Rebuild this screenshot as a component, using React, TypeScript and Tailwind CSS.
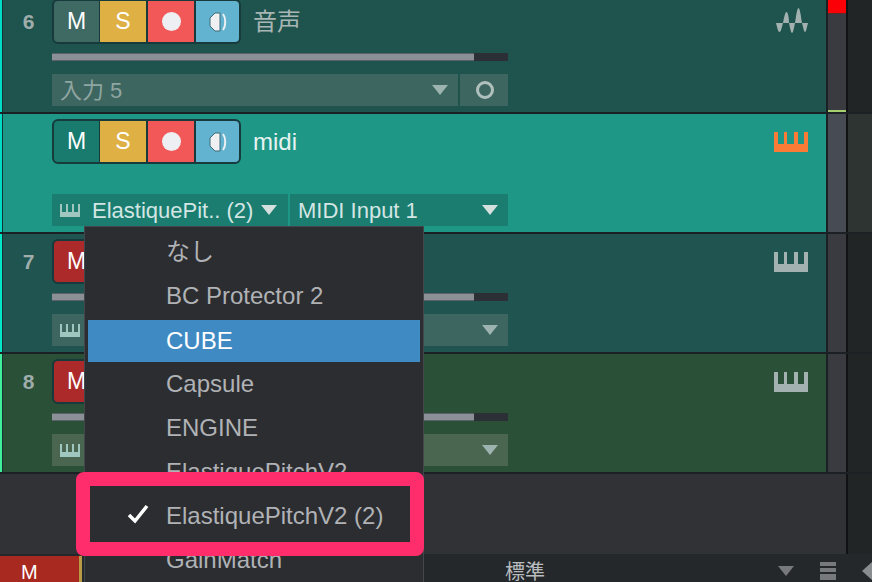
const font = "[font-family:'Liberation_Sans','Noto_Sans_CJK_JP',sans-serif]";

const Piano = ({ color }: { color: string }) => (
  <svg width="34" height="20" viewBox="0 0 34 20">
    <path d="M0 0h4v12h6V0h3v12h7V0h4v12h6V0h4v20H0z" fill={color} />
  </svg>
);

const Piano2 = () => (
  <svg width="20" height="13" viewBox="0 0 20 13">
    <path d="M0 0h2v8h4V0h2v8h4V0h2v8h4V0h2v13H0z" fill="#9fc6bf" />
  </svg>
);

const Wave = () => (
  <svg width="32" height="28" viewBox="0 0 32 28">
    <path
      d="M0 16h7c-1 4-2 9-3.500 9S1 20 0 16zM7 16c1-5 2-11 3.500-11S13 11 13 16zM13 16h6c-1 5-2 10-3 10s-2-5-3-10zM19 16c1-6 2-15 3.500-15S25 10 26 16zM26 16h6c-1 4-2 9-3 9s-2-5-3-9z"
      fill="#a3b2b0"
    />
  </svg>
);

const Caret = ({ color = "#d3e0dd" }: { color?: string }) => (
  <div
    className="h-0 w-0 border-x-[8px] border-t-[10px] border-x-transparent"
    style={{ borderTopColor: color }}
  />
);

const MonitorIcon = () => (
  <svg width="20" height="20" viewBox="0 0 20 20">
    <path d="M12 1v18H7l-5-5V6l5-5z" fill="#eef0f2" stroke="#3c6b78" strokeWidth="1" />
    <path d="M15 2c3 4 3 12 0 16" fill="none" stroke="#eef0f2" strokeWidth="2" />
  </svg>
);

const Buttons = ({ m }: { m: string }) => (
  <div className="flex h-[45px] w-[189px] shrink-0 overflow-hidden rounded-[6px] border-2 border-[#173a3c] bg-[#173a3c] text-[23px] text-white">
    <div className="flex w-[45px] items-center justify-center" style={{ background: m }}>
      M
    </div>
    <div className="ml-[1px] flex w-[46px] items-center justify-center bg-[#dfb044]">S</div>
    <div className="ml-[2px] flex w-[46px] items-center justify-center bg-[#f25858]">
      <div className="h-[19px] w-[19px] rounded-full bg-[#eeeff3]" />
    </div>
    <div className="ml-[2px] flex flex-1 items-center justify-center bg-[#62b3cf]">
      <MonitorIcon />
    </div>
  </div>
);

type Track = {
  num?: string;
  name: string;
  bg: string;
  strip: string;
  field: string;
  m: string;
  active?: boolean;
};

const Row = ({ t, first, children }: { t: Track; first?: boolean; children?: React.ReactNode }) => (
  <div className={`flex h-[120px] shrink-0 border-b-2 border-[#1b2024] ${first ? "-mt-[6px]" : ""}`}>
    <div className="w-[2px]" style={{ background: t.strip }} />
    <div className="w-[1px] bg-[#173033]" />
    <div className="flex w-[823px] pt-[5px]" style={{ background: t.bg }}>
      <div className="w-[49px] pl-[2px] pt-[7px] text-center text-[21px] font-bold text-[#9fadab]">
        {t.num}
      </div>
      <div className="flex w-[456px] flex-col">
        <div className="flex items-center">
          <Buttons m={t.m} />
          <div className={`pl-[12px] text-[24px] ${t.active ? "text-[#e6f3f1]" : "text-[#a9b6b4]"}`}>
            {t.name}
          </div>
        </div>
        {t.active ? (
          <div className="h-[17px]" />
        ) : (
          <div className="mt-[9px] h-[8px] w-[456px] bg-[#2c3036]">
            <div className="h-full w-[422px] border-y border-[#5b6168] bg-[#8b8f96]" />
          </div>
        )}
        {t.active ? (
          <div className="mt-[13px] flex h-[32px] gap-[2px] text-[22px] text-[#d4e6e3]">
            <div className="flex w-[236px] items-center pl-[8px]" style={{ background: t.field }}>
              <Piano2 />
              <span className="pl-[12px]">ElastiquePit.. (2)</span>
              <div className="ml-[8px]">
                <Caret />
              </div>
            </div>
            <div
              className="flex flex-1 items-center justify-between pl-[8px] pr-[10px]"
              style={{ background: t.field }}
            >
              <span>MIDI Input 1</span>
              <Caret />
            </div>
          </div>
        ) : (
          <div className="mt-[13px] flex h-[32px] gap-[2px] text-[22px] text-[#8fa5a1]">{children}</div>
        )}
      </div>
      <div className="flex flex-1 justify-end pr-[18px] pt-[13px]">
        {t.num === "6" ? (
          <div className="-mt-[5px]">
            <Wave />
          </div>
        ) : (
          <Piano color={t.active ? "#f97b35" : "#a3b2b0"} />
        )}
      </div>
    </div>
    <div className="w-[2px] bg-[#1b2024]" />
    <div className={`relative w-[18px] ${t.active ? "bg-[#474b53]" : "bg-[#393b41]"}`}>
      {first && (
        <>
          <div className="h-[20px] border-b border-[#5a2b2b] bg-[#fb0007]" />
          <div className="absolute bottom-0 h-[2px] w-full bg-[#a6cf6e]" />
        </>
      )}
    </div>
    <div className="w-[2px] bg-[#101214]" />
    <div className={`flex-1 ${t.active ? "bg-[#2d3432]" : "bg-[#212526]"}`} />
  </div>
);

const Field = ({ bg }: { bg: string }) => (
  <>
    <div className="flex w-[236px] items-center pl-[8px]" style={{ background: bg }}>
      <Piano2 />
    </div>
    <div className="flex flex-1 items-center justify-end pr-[10px]" style={{ background: bg }}>
      <Caret color="#9db3af" />
    </div>
  </>
);

const tracks: Track[] = [
  { num: "6", name: "音声", bg: "#1f534e", strip: "#00dcc6", field: "#3d6660", m: "#3f6963" },
  { name: "midi", bg: "#1f9786", strip: "#00dcc6", field: "#1a7d70", m: "#197a6e", active: true },
  { num: "7", name: "", bg: "#1f5450", strip: "#00e6c9", field: "#3d6660", m: "#ad2a2a" },
  { num: "8", name: "", bg: "#2a5037", strip: "#3ff09a", field: "#4a6650", m: "#ad2a2a" },
];

const items = ["なし", "BC Protector 2", "CUBE", "Capsule", "ENGINE", "ElastiquePitchV2", "", "GainMatch"];

export default function App() {
  return (
    <div className={`relative flex h-[582px] w-[872px] flex-col overflow-hidden bg-[#313236] ${font}`}>
      <Row t={tracks[0]} first>
        <div
          className="flex w-[406px] items-center justify-between pl-[8px] pr-[10px]"
          style={{ background: tracks[0].field }}
        >
          <span>入力 5</span>
          <Caret color="#9db3af" />
        </div>
        <div className="flex flex-1 items-center justify-center pl-[1px]" style={{ background: tracks[0].field }}>
          <div className="h-[18px] w-[18px] rounded-full border-[3px] border-[#b0c0bd]" />
        </div>
      </Row>
      <Row t={tracks[1]} />
      <Row t={tracks[2]}>
        <Field bg={tracks[2].field} />
      </Row>
      <Row t={tracks[3]}>
        <Field bg={tracks[3].field} />
      </Row>
      <div className="flex min-h-0 flex-1">
        <div className="w-[846px]" />
        <div className="w-[2px] bg-[#101214]" />
        <div className="flex-1 bg-[#212526]" />
      </div>
      <div className="flex h-[28px] shrink-0 bg-[#25282b] text-[#b8bcbf]">
        <div className="mt-[2px] w-[79px] bg-[#a8291f] pl-[21px] pt-[6px] text-[20px] leading-[20px] text-white">M</div>
        <div className="mt-[2px] w-[3px] bg-[#b99a45]" />
        <div className="pl-[423px] pt-[3px] text-[20px]">標準</div>
        <div className="ml-auto flex items-center gap-[26px] pt-[6px]">
          <Caret color="#77797c" />
          <div className="flex flex-col gap-[2px]">
            <div className="h-[4px] w-[16px] bg-[#77797c]" />
            <div className="h-[4px] w-[16px] bg-[#77797c]" />
            <div className="h-[6px] w-[16px] bg-[#77797c]" />
          </div>
          <div className="h-0 w-0 border-y-[9px] border-r-[10px] border-y-transparent border-r-[#8a8d90]" />
        </div>
      </div>

      <div className="absolute left-[84px] top-[226px] flex h-[360px] w-[340px] flex-col border border-[#43464a] bg-[#2c2d30] px-[3px] pt-[3px] text-[24px] text-[#b0b2b6]">
        {items.map((item) => (
          <div
            key={item}
            className={`flex shrink-0 items-center pl-[78px] ${item === "CUBE" ? "mt-[2px] h-[42px] bg-[#3f8ac2] text-white" : "h-[44px]"}`}
          >
            {item}
          </div>
        ))}
      </div>
      <div className="absolute left-[76px] top-[472px] flex h-[84px] w-[348px] items-center rounded-[8px] border-[14px] border-[#ff2d6b] bg-[#2c2d30]">
        <svg className="ml-[37px]" width="22" height="20" viewBox="0 0 22 20">
          <path d="M2 11l6 6L20 2" fill="none" stroke="#ffffff" strokeWidth="3.5" />
        </svg>
        <span className="pl-[17px] pt-[3px] text-[24px] text-[#b0b2b6]">ElastiquePitchV2 (2)</span>
      </div>
    </div>
  );
}
